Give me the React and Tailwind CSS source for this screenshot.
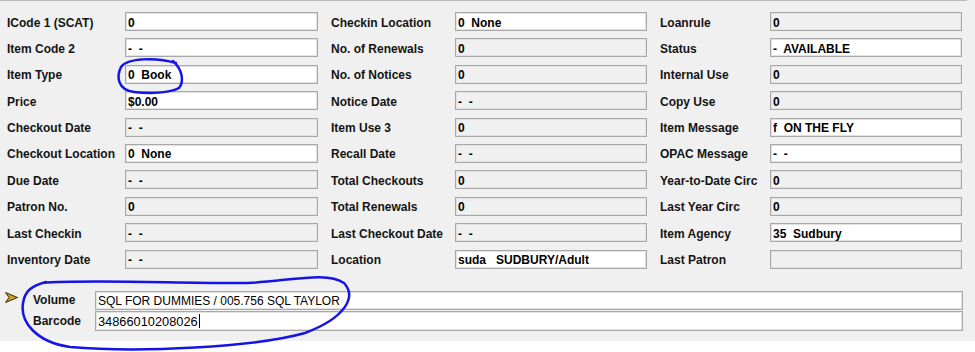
const FONT = { fontFamily: '"Liberation Sans", Arial, sans-serif' };

const columns = [
  {
    labelW: 'w-[118px]',
    boxW: 'w-[193px]',
    rows: [
      ['ICode 1 (SCAT)', '0', true],
      ['Item Code 2', '-  -', true],
      ['Item Type', '0  Book', true],
      ['Price', '$0.00', true],
      ['Checkout Date', '-  -', false],
      ['Checkout Location', '0  None', true],
      ['Due Date', '-  -', false],
      ['Patron No.', '0', false],
      ['Last Checkin', '-  -', false],
      ['Inventory Date', '-  -', false],
    ],
  },
  {
    labelW: 'w-[124px]',
    boxW: 'w-[192px]',
    rows: [
      ['Checkin Location', '0  None', true],
      ['No. of Renewals', '0', false],
      ['No. of Notices', '0', false],
      ['Notice Date', '-  -', false],
      ['Item Use 3', '0', false],
      ['Recall Date', '-  -', false],
      ['Total Checkouts', '0', false],
      ['Total Renewals', '0', false],
      ['Last Checkout Date', '-  -', false],
      ['Location', 'suda   SUDBURY/Adult', true],
    ],
  },
  {
    labelW: 'w-[110px]',
    boxW: 'w-[192px]',
    rows: [
      ['Loanrule', '0', false],
      ['Status', '-  AVAILABLE', true],
      ['Internal Use', '0', false],
      ['Copy Use', '0', false],
      ['Item Message', 'f  ON THE FLY', true],
      ['OPAC Message', '-  -', true],
      ['Year-to-Date Circ', '0', false],
      ['Last Year Circ', '0', false],
      ['Item Agency', '35  Sudbury', true],
      ['Last Patron', '', false],
    ],
  },
];

const Field = ({ label, value, editable, labelW, boxW }) => (
  <div className="flex h-[26.4px] items-start">
    <div className={`${labelW} h-[19px] flex items-center pt-[2px] text-[12px] font-bold text-[#141414] whitespace-pre`}>
      {label}
    </div>
    <div
      className={`${boxW} h-[19px] flex items-center pl-[2px] pt-[2px] border border-[#a8a8a8] shadow-[inset_0_0_0_1px_#e2e2e2] text-[12px] font-bold text-black whitespace-pre ${
        editable ? 'bg-white' : 'bg-[#f0f0f0]'
      }`}
    >
      {value}
    </div>
  </div>
);

export default function App() {
  return (
    <div className="relative w-[975px] h-[352px] bg-white overflow-hidden" style={FONT}>
      <div className="h-[341px] bg-[#f0f0f0]">
        <div className="w-[967px] h-px bg-[#b8b8b8]" />
        <div className="flex pl-[7px] pt-[11px] gap-[13px]">
          {columns.map((col, i) => (
            <div key={i} className="flex flex-col">
              {col.rows.map(([label, value, editable]) => (
                <Field
                  key={label}
                  label={label}
                  value={value}
                  editable={editable}
                  labelW={col.labelW}
                  boxW={col.boxW}
                />
              ))}
            </div>
          ))}
        </div>

        <div className="flex mt-[15px]">
          <div className="w-[33px] flex justify-start pl-[5px] pt-[1px]">
            <svg width="13" height="11" viewBox="0 0 13 11">
              <path d="M0.5 0.5 L12.5 5.5 L0.5 10.5 L4 5.5 Z" fill="#d4a017" stroke="#3a2a00" strokeWidth="1" strokeLinejoin="round" />
            </svg>
          </div>
          <div className="flex flex-col">
            <div className="flex h-[20px] items-start">
              <div className="w-[62px] h-[19px] flex items-center text-[12px] font-bold text-[#141414]">Volume</div>
              <div className="w-[868px] h-[19px] flex items-center pl-[2px] pt-[1px] bg-white border border-[#a8a8a8] shadow-[inset_0_0_0_1px_#e2e2e2] text-[12px] text-black whitespace-pre">
                SQL FOR DUMMIES / 005.756 SQL TAYLOR
              </div>
            </div>
            <div className="flex h-[20px] items-start">
              <div className="w-[62px] h-[20px] flex items-center text-[12px] font-bold text-[#141414]">Barcode</div>
              <div className="w-[868px] h-[20px] flex items-center pl-[2px] pt-[1px] bg-white border border-[#a8a8a8] shadow-[inset_0_0_0_1px_#e2e2e2] text-[12.8px] text-black whitespace-pre">
                34866010208026
                <span className="inline-block w-px h-[14px] bg-black ml-px" />
              </div>
            </div>
          </div>
        </div>
      </div>

      {/* hand-drawn annotation marks */}
      <svg className="absolute inset-0 pointer-events-none" width="975" height="352" viewBox="0 0 975 352" fill="none">
        <path
          d="M176 63 C156 57 127 58 121 67 C116 77 118 90 134 92 C150 94 170 93 179 88 C184 82 183 70 173 61"
          stroke="#1414e6"
          strokeWidth="2.5"
          strokeLinecap="round"
        />
        <path
          d="M42 283 C90 279 190 284 248 283 C290 281 327 271 344 283 C357 297 345 318 305 333 C255 347 140 353 70 347 C36 342 20 322 23 303 C25 291 31 286 46 282"
          stroke="#1414e6"
          strokeWidth="2.5"
          strokeLinecap="round"
        />
      </svg>
    </div>
  );
}
